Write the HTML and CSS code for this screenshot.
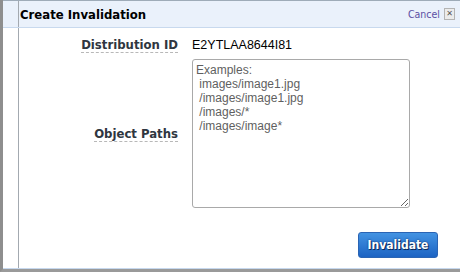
FILE: index.html
```html
<!DOCTYPE html>
<html lang="en">
<head>
  <meta charset="UTF-8">
  <title>Create Invalidation</title>
  <link rel="stylesheet" href="styles.css">
</head>
<body>

<div class="frame">
  <div class="dialog">
    <div class="dialog-header">
      <h1>Create Invalidation</h1>
      <div class="header-actions">
        <a href="#" class="cancel-link">Cancel</a>
        <span class="close-box">&#x2715;</span>
      </div>
    </div>

    <div class="dialog-body">
      <form class="form-grid">
        <label class="form-label"><span>Distribution ID</span></label>
        <div class="form-value">E2YTLAA8644I81</div>

        <label class="form-label" for="paths"><span>Object Paths</span></label>
        <textarea id="paths" placeholder="Examples:&#10; images/image1.jpg&#10; /images/image1.jpg&#10; /images/*&#10; /images/image*"></textarea>
      </form>

      <div class="button-row">
        <button type="button" class="btn-primary">Invalidate</button>
      </div>
    </div>
  </div>
</div>

</body>
</html>
```

FILE: styles.css
```css
html, body {
  margin: 0;
  height: 272px;
  overflow: hidden;
  background: #fff;
}
.frame {
  display: flex;
  height: 272px;
  box-sizing: border-box;
  border-left: 3px solid #8e8e8e;
  border-bottom: 3px solid #9a9a9a;
}
.dialog {
  flex: 1;
  display: flex;
  flex-direction: column;
  border-top: 1px solid #9eabb8;
  border-bottom: 1px solid #c6d8ee;
  background: linear-gradient(to right, transparent 15px, #a3a9b0 15px, #a3a9b0 16px, transparent 16px), #fff;
}
.dialog-header {
  display: flex;
  align-items: center;
  justify-content: space-between;
  height: 26px;
  border-bottom: 1px solid #c8d9ee;
  background: linear-gradient(to right, transparent 15px, #a3a9b0 15px, #a3a9b0 16px, transparent 16px), #eaf1fb;
  padding: 0 5px 0 17px;
}
.dialog-header h1 {
  margin: 0;
  font-family: "DejaVu Sans Condensed", "DejaVu Sans", sans-serif;
  font-size: 13px;
  font-weight: bold;
  color: #000;
}
.header-actions {
  display: flex;
  align-items: center;
  gap: 4px;
}
.cancel-link {
  font-family: "DejaVu Sans Condensed", "DejaVu Sans", sans-serif;
  font-size: 10.5px;
  color: #5b4ea3;
  text-decoration: none;
}
.close-box {
  width: 9px;
  height: 10px;
  border: 1px solid #b4b4b4;
  background: #ececec;
  color: #555;
  font-family: "DejaVu Sans", sans-serif;
  font-size: 8px;
  line-height: 10px;
  text-align: center;
  font-weight: bold;
}
.dialog-body {
  flex: 1;
  display: flex;
  flex-direction: column;
  padding-top: 9px;
}
.form-grid {
  display: grid;
  grid-template-columns: 175px 218px;
  column-gap: 14px;
  row-gap: 6px;
  align-items: center;
  margin: 0;
}
.form-label {
  text-align: right;
  font-family: "DejaVu Sans Condensed", "DejaVu Sans", sans-serif;
  font-size: 13px;
  font-weight: bold;
  color: #2f3640;
  line-height: 16px;
}
.form-label span {
  border-bottom: 1px dashed #b8b8b8;
}
.form-value {
  font-family: "Liberation Sans", Arial, sans-serif;
  font-size: 12.5px;
  color: #000;
  line-height: 16px;
}
textarea {
  box-sizing: border-box;
  width: 218px;
  height: 149px;
  border: 1px solid #a9a9a9;
  border-radius: 3px;
  padding: 3px 3px;
  font-family: "Liberation Sans", Arial, sans-serif;
  font-size: 12px;
  resize: both;
}
textarea::placeholder {
  color: #5f5f5f;
}
.button-row {
  display: flex;
  justify-content: flex-end;
  padding: 24px 22px 0 0;
}
.btn-primary {
  height: 26px;
  width: 80px;
  border: 1px solid #2a64b4;
  border-radius: 3px;
  background: linear-gradient(#4393e2, #1c63c3);
  color: #fff;
  font-family: "DejaVu Sans Condensed", "DejaVu Sans", sans-serif;
  font-size: 12px;
  font-weight: bold;
  text-shadow: 0 0 2px #0b2a5c, 1px 1px 0 #0b2a5c;
  cursor: pointer;
}
```
